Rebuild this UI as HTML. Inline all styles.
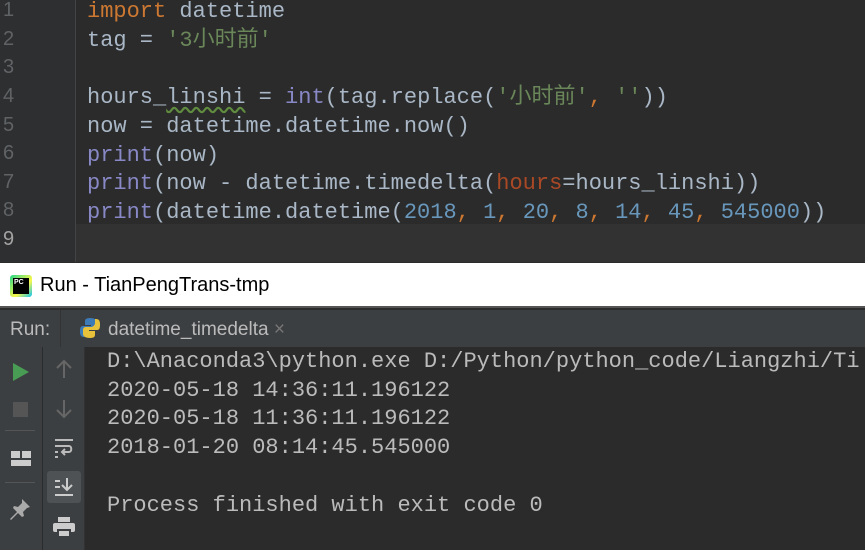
<!DOCTYPE html>
<html><head><meta charset="utf-8"><style>
*{margin:0;padding:0;box-sizing:border-box}
body{width:865px;height:550px;overflow:hidden;background:#2b2b2b;position:relative;font-family:"Liberation Mono","Noto Sans CJK SC",monospace}
.ed{position:absolute;left:0;top:0;width:865px;height:262px;background:#2b2b2b}
.gut{position:absolute;left:0;top:0;width:76px;height:262px;background:#2e2f30;border-right:1px solid #444}
.cur{position:absolute;left:0;top:224px;width:865px;height:38px;background:#323232}
.ln{position:absolute;left:3px;font-size:20px;color:#606366;font-family:"Liberation Sans",sans-serif}
.code{position:absolute;left:87px;font-size:22px;line-height:28.7px;color:#a9b7c6;white-space:pre;top:-2px}
.k{color:#cc7832}.s{color:#6a8759}.b{color:#8888c6}.n{color:#6897bb}.p{color:#aa4926}
.u{text-decoration:underline wavy #5f8c3e;text-underline-offset:3px}
.title{position:absolute;left:0;top:263px;width:865px;height:45px;background:#fff;border-bottom:2px solid #555}
.title span{position:absolute;left:40px;top:11px;font:20px "Liberation Sans",sans-serif;color:#000}
.hdr{position:absolute;left:0;top:310px;width:865px;height:37px;background:#3c3f41;font-family:"Liberation Sans",sans-serif;color:#bbb;font-size:19px}
.lt{position:absolute;left:0;top:347px;width:43px;height:203px;background:#3c3f41;border-right:1px solid #2b2b2b}
.lt2{position:absolute;left:43px;top:347px;width:42px;height:203px;background:#3c3f41;border-right:1px solid #323232}
.con{position:absolute;left:107px;top:348px;font-size:22px;line-height:28.7px;color:#bbbbbb;white-space:pre}
</style></head><body>
<div class="ed">
<div class="cur"></div>
<div class="gut"></div>
<div class="ln" style="top:-1px">1</div><div class="ln" style="top:28px">2</div><div class="ln" style="top:56px">3</div><div class="ln" style="top:85px">4</div><div class="ln" style="top:114px">5</div><div class="ln" style="top:142px">6</div><div class="ln" style="top:171px">7</div><div class="ln" style="top:199px">8</div><div class="ln" style="top:228px;color:#a4a3a3">9</div>
<div class="code"><span class="k">import</span> datetime
tag = <span class="s">'3小时前'</span>

hours_<span class="u">linshi</span> = <span class="b">int</span>(tag.replace(<span class="s">'小时前'</span><span class="k">,</span> <span class="s">''</span>))
now = datetime.datetime.now()
<span class="b">print</span>(now)
<span class="b">print</span>(now - datetime.timedelta(<span class="p">hours</span>=hours_linshi))
<span class="b">print</span>(datetime.datetime(<span class="n">2018</span><span class="k">,</span> <span class="n">1</span><span class="k">,</span> <span class="n">20</span><span class="k">,</span> <span class="n">8</span><span class="k">,</span> <span class="n">14</span><span class="k">,</span> <span class="n">45</span><span class="k">,</span> <span class="n">545000</span>))</div>
</div>
<div class="title">
<div style="position:absolute;left:10px;top:12px;width:22px;height:22px;background:linear-gradient(135deg,#21d789,#fcf84a 60%,#07c3f2);border-radius:3px"><div style="position:absolute;left:3px;top:3px;width:16px;height:16px;background:#000;color:#fff;font:bold 7px 'Liberation Sans',sans-serif;padding:1px">PC</div></div>
<span>Run - TianPengTrans-tmp</span></div>
<div class="hdr">
<span style="position:absolute;left:10px;top:9px">Run:</span>
<div style="position:absolute;left:60px;top:0;width:1px;height:37px;background:#333"></div>
<svg style="position:absolute;left:79px;top:7px" width="22" height="22" viewBox="0 0 22 22"><path d="M11 1c-5 0-5 2-5 4v3h6v1H4c-3 0-3 3-3 6 0 3 1 5 4 5h1v-4c0-2 2-4 4-4h5c2 0 3-1 3-3V5c0-2-2-4-7-4z" fill="#3d7ab8"/><path d="M11 21c5 0 5-2 5-4v-3h-6v-1h8c3 0 3-3 3-6 0-3-1-5-4-5h-1v4c0 2-2 4-4 4H7c-2 0-3 1-3 3v4c0 2 2 4 7 4z" fill="#e8c23a"/></svg>
<span style="position:absolute;left:108px;top:9px">datetime_timedelta <span style="color:#777">×</span></span>
</div>
<div class="lt">
<div style="position:absolute;left:13px;top:16px;width:0;height:0;border-left:16px solid #499c54;border-top:9px solid transparent;border-bottom:9px solid transparent"></div>
<div style="position:absolute;left:13px;top:55px;width:15px;height:15px;background:#555"></div>
<div style="position:absolute;left:5px;top:83px;width:30px;height:1px;background:#555"></div>
<div style="position:absolute;left:11px;top:104px;width:9px;height:7px;background:#ccc"></div>
<div style="position:absolute;left:22px;top:104px;width:9px;height:7px;background:#ccc"></div>
<div style="position:absolute;left:11px;top:113px;width:20px;height:6px;background:#ccc"></div>
<div style="position:absolute;left:5px;top:135px;width:30px;height:1px;background:#555"></div>
<svg style="position:absolute;left:8px;top:150px" width="24" height="24" viewBox="0 0 24 24"><path d="M14 2l8 8-3 1-4 4 1 4-2 1-4-4-7 7-1-1 7-7-4-4 1-2 4 1 4-4z" fill="#aaa"/></svg>
</div>
<div class="lt2">
<svg style="position:absolute;left:11px;top:12px" width="20" height="20" viewBox="0 0 20 20"><path d="M10 2v17M3 9l7-7 7 7" stroke="#666" stroke-width="2" fill="none"/></svg>
<svg style="position:absolute;left:11px;top:52px" width="20" height="20" viewBox="0 0 20 20"><path d="M10 1v17M3 11l7 7 7-7" stroke="#666" stroke-width="2" fill="none"/></svg>
<svg style="position:absolute;left:10px;top:90px" width="22" height="22" viewBox="0 0 22 22"><path d="M2 3h18M2 9h14c3 0 3 6 0 6h-6M2 15h3M2 20h3" stroke="#bbb" stroke-width="2" fill="none"/><path d="M12 12l-3 3 3 3" stroke="#bbb" stroke-width="2" fill="none"/></svg>
<div style="position:absolute;left:4px;top:124px;width:34px;height:32px;background:#4e5254;border-radius:3px"></div>
<svg style="position:absolute;left:10px;top:129px" width="22" height="22" viewBox="0 0 22 22"><path d="M2 5h5M2 11h5M2 19h18M14 2v12M9 9l5 5 5-5" stroke="#ccc" stroke-width="2" fill="none"/></svg>
<svg style="position:absolute;left:9px;top:168px" width="24" height="24" viewBox="0 0 24 24"><rect x="6" y="2" width="12" height="5" fill="#ccc"/><rect x="1" y="8" width="22" height="9" rx="2" fill="#ccc"/><rect x="6" y="15" width="12" height="7" fill="#ccc" stroke="#3c3f41" stroke-width="2"/></svg>
</div>
<div class="con">D:\Anaconda3\python.exe D:/Python/python_code/Liangzhi/Ti
2020-05-18 14:36:11.196122
2020-05-18 11:36:11.196122
2018-01-20 08:14:45.545000

Process finished with exit code 0</div>
</body></html>
